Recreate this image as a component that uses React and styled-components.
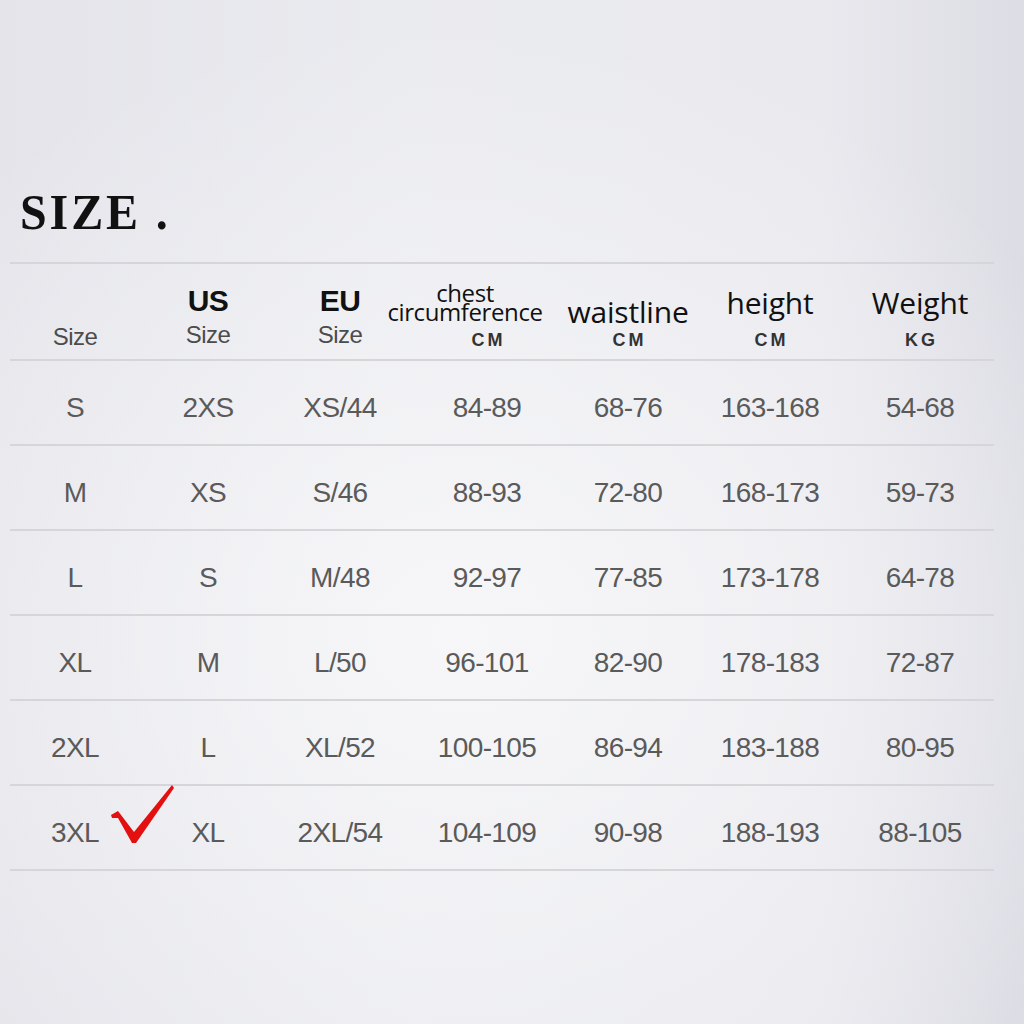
import React from "react";
import styled, { createGlobalStyle } from "styled-components";

const GlobalStyle = createGlobalStyle`
	html, body {
		margin: 0;
		padding: 0;
	}
	body {
		font-family: "Liberation Sans", Arial, sans-serif;
	}
`;

const rows = [
	["S", "2XS", "XS/44", "84-89", "68-76", "163-168", "54-68"],
	["M", "XS", "S/46", "88-93", "72-80", "168-173", "59-73"],
	["L", "S", "M/48", "92-97", "77-85", "173-178", "64-78"],
	["XL", "M", "L/50", "96-101", "82-90", "178-183", "72-87"],
	["2XL", "L", "XL/52", "100-105", "86-94", "183-188", "80-95"],
	["3XL", "XL", "2XL/54", "104-109", "90-98", "188-193", "88-105"],
];

const CheckMark = () => (
	<Check width="75" height="70" viewBox="0 0 75 70">
		<path
			d="M6 34 L13 30 L29 51 L67 4 L69 7 L31 62 L27 62 L13 37 L7 37 Z"
			fill="#e3100f"
		/>
	</Check>
);

const App = () => {
	return (
		<Page>
			<GlobalStyle />
			<Title>SIZE .</Title>
			<Table>
				<HeadRow>
					<HeadCell>
						<SubLabel $plain>Size</SubLabel>
					</HeadCell>
					<HeadCell>
						<BoldLabel>US</BoldLabel>
						<SubLabel>Size</SubLabel>
					</HeadCell>
					<HeadCell>
						<BoldLabel>EU</BoldLabel>
						<SubLabel>Size</SubLabel>
					</HeadCell>
					<HeadCell>
						<Measure $small $shift={-22}>
							chest
							<br />
							circumference
						</Measure>
						<Unit>CM</Unit>
					</HeadCell>
					<HeadCell>
						<Measure $gap={3}>waistline</Measure>
						<Unit>CM</Unit>
					</HeadCell>
					<HeadCell>
						<Measure $gap={12}>height</Measure>
						<Unit>CM</Unit>
					</HeadCell>
					<HeadCell>
						<Measure $gap={12}>Weight</Measure>
						<Unit>KG</Unit>
					</HeadCell>
				</HeadRow>
				{rows.map((row, i) => (
					<Row key={row[0]}>
						{row.map((cell, j) => (
							<Cell key={j}>{cell}</Cell>
						))}
						{i === rows.length - 1 && <CheckMark />}
					</Row>
				))}
			</Table>
		</Page>
	);
};

export default App;

const Page = styled.div`
	width: 1024px;
	height: 1024px;
	box-sizing: border-box;
	padding: 180px 30px 0 10px;
	background:
		radial-gradient(ellipse 70% 60% at 45% 62%, rgba(248, 248, 250, 0.9) 0%, rgba(244, 244, 247, 0) 100%),
		linear-gradient(90deg, #e4e4ea 0%, #eaebef 40%, #e9e9ee 80%, #dcdde4 100%);
	overflow: hidden;
`;

const Title = styled.h1`
	margin: 0 0 18px 10px;
	font-family: "Liberation Serif", "Times New Roman", serif;
	font-weight: bold;
	font-size: 50px;
	line-height: 64px;
	letter-spacing: 3px;
	color: #111;
	transform: scaleX(0.96);
	transform-origin: left;
`;

const Table = styled.div`
	width: 984px;
	border-top: 2px solid #d6d6da;
`;

const columns = "130px 136px 128px 166px 116px 168px 132px";

const HeadRow = styled.div`
	display: grid;
	grid-template-columns: ${columns};
	height: 97px;
	border-bottom: 2px solid #d6d6da;
	align-items: end;
	padding-bottom: 10px;
	box-sizing: border-box;
`;

const HeadCell = styled.div`
	display: flex;
	flex-direction: column;
	align-items: center;
	justify-content: flex-end;
`;

const BoldLabel = styled.div`
	font-family: "Liberation Sans", Arial, sans-serif;
	font-weight: bold;
	font-size: 30px;
	line-height: 32px;
	color: #111;
	letter-spacing: -0.5px;
	margin-bottom: 4px;
`;

const SubLabel = styled.div`
	font-family: "Liberation Sans", Arial, sans-serif;
	font-size: 24px;
	line-height: 28px;
	color: #4c4c4c;
	letter-spacing: -0.6px;
	margin-bottom: ${(p) => (p.$plain ? "-2px" : "0")};
`;

const Measure = styled.div`
	font-family: "Open Sans", "Noto Sans", sans-serif;
	font-size: ${(p) => (p.$small ? "24px" : "30px")};
	line-height: ${(p) => (p.$small ? "19px" : "30px")};
	text-align: center;
	color: #111;
	letter-spacing: ${(p) => (p.$small ? "-0.4px" : "-0.2px")};
	margin-bottom: ${(p) => (p.$small ? 9 : p.$gap)}px;
	transform: translateX(${(p) => p.$shift || 0}px);
	white-space: nowrap;
`;

const Unit = styled.div`
	font-family: "Liberation Sans", Arial, sans-serif;
	font-weight: bold;
	font-size: 18px;
	line-height: 20px;
	letter-spacing: 3px;
	margin-right: -3px;
	color: #333;
	margin-bottom: -1px;
`;

const Row = styled.div`
	position: relative;
	display: grid;
	grid-template-columns: ${columns};
	height: 85px;
	box-sizing: border-box;
	border-bottom: 2px solid #d6d6da;
	align-items: center;
	padding-top: 10px;
`;

const Cell = styled.div`
	text-align: center;
	font-family: "Liberation Sans", Arial, sans-serif;
	font-size: 28px;
	letter-spacing: -0.6px;
	color: #5a5a5a;
`;

const Check = styled.svg`
	position: absolute;
	left: 95px;
	top: -5px;
`;
